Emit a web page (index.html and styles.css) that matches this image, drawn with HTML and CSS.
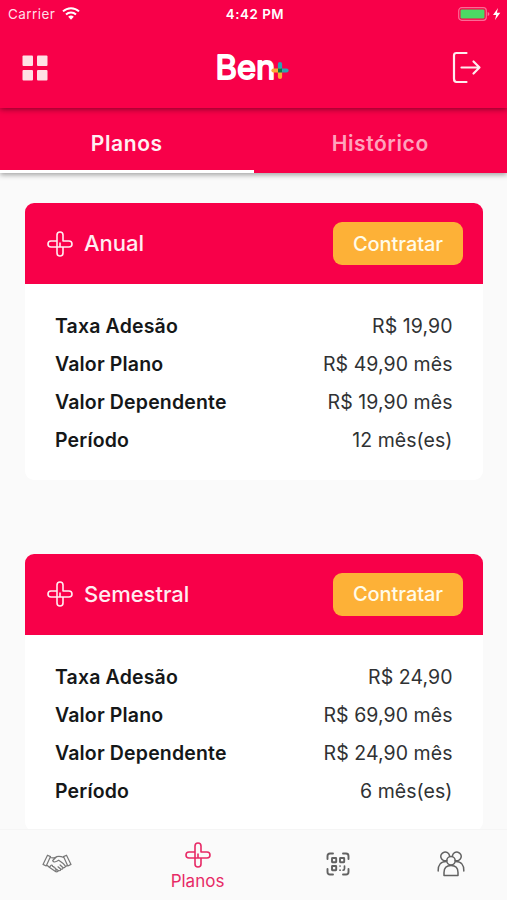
FILE: index.html
```html
<!DOCTYPE html>
<html lang="pt-BR">
<head>
<meta charset="utf-8">
<title>Planos</title>
<link rel="stylesheet" href="styles.css">
</head>
<body>
<svg class="defs" aria-hidden="true">
  <symbol id="plus" viewBox="0 0 26 26">
    <path d="M10 16V4a3 3 0 0 1 6 0v6h6a3 3 0 0 1 0 6H4a3 3 0 0 1 0-6h6M10 15.500V22a3 3 0 0 0 6 0v-6M13 11.500V16" fill="none" stroke="currentColor" stroke-width="1.600" stroke-linejoin="round"/>
  </symbol>
</svg>
<div class="app">
  <header class="top">
    <div class="status">
      <div class="carrier"><span>Carrier</span>
        <svg width="18" height="13" viewBox="0 0 18 13" fill="none" stroke="#fff" stroke-width="2"><path d="M1 4.4a11.500 11.500 0 0 1 16 0M4 7.500a7.200 7.200 0 0 1 10 0"/><path d="M6.200 9.800a4 4 0 0 1 5.600 0L9 12.700z" fill="#fff" stroke="none"/></svg>
      </div>
      <div class="clock">4:42 PM</div>
      <div class="power">
        <svg width="44" height="16" viewBox="0 0 44 16"><rect x=".7" y="1.700" width="27.600" height="12.600" rx="3" fill="none" stroke="#fff" stroke-opacity=".42" stroke-width="1.200"/><rect x="2.500" y="3.500" width="24" height="9" rx="1.300" fill="#4cd964"/><path d="M29.700 6q1.700.5 1.700 2t-1.700 2z" fill="#fff" fill-opacity=".45"/><path d="M40 2l-5 7h3.200L37 14l5.300-7.200h-3.400z" fill="#fff"/></svg>
      </div>
    </div>
    <div class="bar">
      <svg width="26" height="26" viewBox="0 0 26 26" fill="#ffe0e5"><rect x=".5" y=".5" width="10.500" height="10.500" rx="1"/><rect x="15" y=".5" width="10.500" height="10.500" rx="1"/><rect x=".5" y="15" width="10.500" height="10.500" rx="1"/><rect x="15" y="15" width="10.500" height="10.500" rx="1"/></svg>
      <svg class="logo" width="80" height="52" viewBox="0 0 80 52">
        <text x="1.500" y="36.500" textLength="60" lengthAdjust="spacingAndGlyphs">Ben</text>
        <g fill="none" stroke-width="4.200" stroke-linecap="round"><path d="M66 22v6.500" stroke="#2aa4b4"/><path d="M66 28.500h6.500" stroke="#2aa4b4"/><path d="M59.500 28.500H66" stroke="#fbac35"/><path d="M66 28.500v6.500" stroke="#fbac35"/></g><path d="M64 26.500h4v4h-4z" fill="#087b43"/>
      </svg>
      <svg width="30" height="34" viewBox="0 0 30 34" fill="none" stroke="#ffecef" stroke-width="2.200" stroke-linecap="round" stroke-linejoin="round"><path d="M14.500 2H4.500Q2 2 2 4.500v23Q2 31 4.500 31h10M9.500 16.500h18M21.500 10.500l6 6-6 6"/></svg>
    </div>
  </header>
  <nav class="tabs">
    <div class="tab active"><span>Planos</span></div>
    <div class="tab"><span>Histórico</span></div>
  </nav>
  <main>
    <section class="card">
      <header><svg class="plus"><use href="#plus"/></svg><h2>Anual</h2><button>Contratar</button></header>
      <dl>
        <div><dt>Taxa Adesão</dt><dd>R$ 19,90</dd></div>
        <div><dt>Valor Plano</dt><dd>R$ 49,90 mês</dd></div>
        <div><dt>Valor Dependente</dt><dd>R$ 19,90 mês</dd></div>
        <div><dt>Período</dt><dd>12 mês(es)</dd></div>
      </dl>
    </section>
    <section class="card">
      <header><svg class="plus"><use href="#plus"/></svg><h2>Semestral</h2><button>Contratar</button></header>
      <dl>
        <div><dt>Taxa Adesão</dt><dd>R$ 24,90</dd></div>
        <div><dt>Valor Plano</dt><dd>R$ 69,90 mês</dd></div>
        <div><dt>Valor Dependente</dt><dd>R$ 24,90 mês</dd></div>
        <div><dt>Período</dt><dd>6 mês(es)</dd></div>
      </dl>
    </section>
  </main>
  <nav class="bottom">
    <div class="item">
      <svg width="30" height="20" viewBox="0 0 30 20" fill="none" stroke="#777" stroke-width="1.200" stroke-linejoin="round" stroke-linecap="round"><path d="M5.500 1.200l3 1.400L4.200 12 1 10.400zM24.500 1.200l-3 1.400L25.800 12 29 10.400zM8.200 3.500q3 1 5.300-.3M21.800 3.500q-4-1.700-7.200-.8L10.700 6.500q.7 2.500 4 .8l2-1.100q5.300 3.300 7 6.300l1.800-1.300M5 11.200l2.300 2.100 6.200 4.200q2 .8 3-.8 2 .3 2.400-1.400 2 0 2.200-1.500 2 0 2.300-1.500M7.300 13.300l1.700-2q1.500-.4 1.500 1 1.700-.3 1.500 1.300 1.700-.1 1.400 1.400 1.500.4.100 2.500M16.500 16.700l-2-1.500M18.900 15.300l-2.900-2.500M21.100 13.800l-3-2.800"/></svg>
    </div>
    <div class="item active"><svg class="plus"><use href="#plus"/></svg><span>Planos</span></div>
    <div class="item">
      <svg width="24" height="24" viewBox="0 0 24 24" fill="none" stroke="#626262" stroke-width="1.900" stroke-linecap="round"><path d="M1.500 7V4q0-2.500 2.500-2.500h3M17 1.500h3q2.500 0 2.500 2.500v3M22.500 17v3q0 2.500-2.500 2.500h-3M7 22.500H4q-2.500 0-2.500-2.500v-3"/><rect x="6" y="6" width="4.200" height="4.200" rx=".4"/><rect x="14" y="6" width="4.200" height="4.200" rx=".4"/><rect x="6" y="14" width="4.200" height="4.200" rx=".4"/><path d="M14 14h.1M14 18.200h.1M18.500 14v2.500q0 1.700-1.300 1.700" stroke-width="1.700"/></svg>
    </div>
    <div class="item">
      <svg width="28" height="26" viewBox="0 0 28 26" fill="none" stroke="#626262" stroke-width="1.500" stroke-linecap="round" stroke-linejoin="round"><circle cx="14" cy="9.800" r="4.200"/><path d="M7 24.500v-3q0-7 7-7t7 7v3zM9.800 9.500A4.400 4.400 0 1 1 12.500 4.500M18.200 9.500A4.400 4.400 0 1 0 15.500 4.500M9.300 10.500Q1 10.500 1.200 20M18.700 10.500Q27 10.500 26.800 20"/></svg>
    </div>
  </nav>
</div>
</body>
</html>
```
FILE: styles.css
```css
* { box-sizing: border-box; }
body { margin: 0; background: #fafafa; font-family: Inter, "Liberation Sans", sans-serif; color: #151718; }
svg { display: block; flex: none; }
.defs { width: 0; height: 0; position: absolute; }
.app { width: 507px; height: 900px; display: flex; flex-direction: column; overflow: hidden; }
.top { height: 108px; flex: none; background: #f80049; box-shadow: 0 1px 6px rgba(60,0,20,.65); z-index: 2; }
.status { height: 27px; display: grid; grid-template-columns: 1fr 1fr 1fr; align-items: center; color: #fff; padding: 0 5px 0 8px; font-size: 13.5px; }
.carrier { display: flex; gap: 7px; align-items: center; color: #ffdfe7; letter-spacing: .45px; }
.clock { text-align: center; font-weight: 600; font-size: 13.3px; letter-spacing: .55px; }
.power { justify-self: end; }
.bar { height: 81px; display: flex; justify-content: space-between; padding: 0 25px 0 22px; align-items: center; }
.logo { margin-left: 8px; }
.logo text { font-family: Inter, sans-serif; font-size: 33px; font-weight: 400; fill: #fff; stroke: #fff; stroke-width: 1.8px; stroke-linejoin: round; }
.tabs { height: 65px; flex: none; display: grid; grid-template-columns: 1fr 1fr; background: #f80049; color: #ffa3bd; box-shadow: 0 2px 5px rgba(0,0,0,.35); z-index: 1; }
.tab { display: flex; align-items: center; justify-content: center; border-bottom: 3px solid transparent; padding-top: 9px; font-size: 21px; font-weight: 600; letter-spacing: .6px; }
.tab.active { color: #fff0f3; border-color: #fff; }
main { height: 656px; flex: none; padding: 30px 24.5px 0 25px; display: flex; flex-direction: column; gap: 73.6px; }
.card { background: #fff; border-radius: 9px; height: 277px; flex: none; overflow: hidden; }
.card header { height: 81.4px; background: #f80049; display: flex; align-items: center; padding: 0 19.5px 0 21.500px; color: #ffedf1; }
.plus { width: 26px; height: 26px; }
h2 { margin: 0 auto 1px 11.5px; font-size: 22px; font-weight: 500; letter-spacing: 0; }
button { width: 130px; height: 43px; padding: 0; border: 0; border-radius: 9px; background: #fdb137; color: #fffbe9; font: 500 20px Inter, sans-serif; letter-spacing: -.05px; }
dl { margin: 0; padding: 23px 30px 0; }
dl div { height: 37.9px; display: flex; justify-content: space-between; align-items: center; font-size: 19.5px; }
dt { font-weight: 600; letter-spacing: .16px; }
dd { margin: 0; color: #303234; letter-spacing: .06px; }
.bottom { height: 71px; flex: none; display: grid; grid-template-columns: 114px 167px 114px 112px; background: #fafafa; border-top: 1px solid #f5f5f5; }
.item { display: flex; flex-direction: column; align-items: center; justify-content: center; padding-bottom: 2px; }
.item.active { color: #e72a66; font-size: 17px; gap: 3px; padding: 2px 0 0; }
```
